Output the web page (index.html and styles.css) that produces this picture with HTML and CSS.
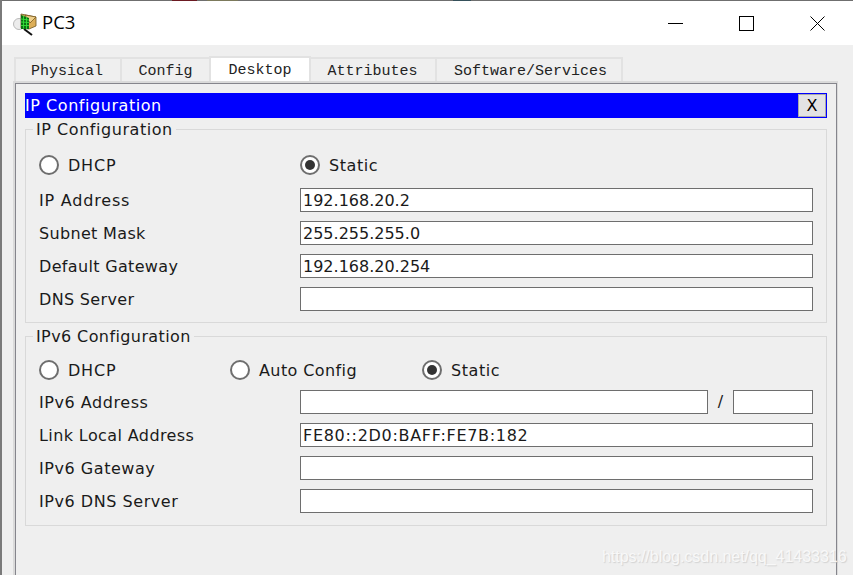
FILE: index.html
```html
<!DOCTYPE html>
<html lang="en">
<head>
<meta charset="utf-8">
<title>PC3</title>
<link rel="stylesheet" href="styles.css">
</head>
<body>
<div class="window">
  <div class="top-edge"></div>
  <header class="titlebar">
    <svg class="app-icon" width="24" height="24" viewBox="0 0 24 24" aria-hidden="true">
      <circle cx="6" cy="12" r="5.500" fill="#ececec" stroke="#b9b9b9"/>
      <path d="M11 17l8 6" stroke="#111" stroke-width="2" fill="none"/>
      <path d="M8 2l15 3v9l-7 3-8-1z" fill="#dcae58" stroke="#6f5522" stroke-width=".8"/>
      <path d="M12 3l11 2-6 6z" fill="#f0d08c" stroke="#7a5a20" stroke-width=".8"/>
      <path d="M8 3l8 3v11l-8 0z" fill="#0a6f12"/>
      <path d="M10.500 3.500v13M13.500 5v12M8 7l8 1M8 10l8 .5M8 13.500h8" stroke="#35e23a" stroke-width=".9" fill="none"/>
    </svg>
    <span class="title">PC3</span>
    <div class="controls">
      <svg class="ctl" width="15" height="15" viewBox="0 0 15 15" aria-hidden="true"><path d="M0 7.500h15" stroke="#000" fill="none"/></svg>
      <svg class="ctl" width="15" height="15" viewBox="0 0 15 15" aria-hidden="true"><rect x=".5" y=".5" width="14" height="14" stroke="#000" fill="none"/></svg>
      <svg class="ctl" width="15" height="15" viewBox="0 0 15 15" aria-hidden="true"><path d="M.5.500l14 14M14.500.500l-14 14" stroke="#000" fill="none"/></svg>
    </div>
  </header>
  <main class="content">
    <nav class="tabs">
      <span class="tab tab-physical">Physical</span>
      <span class="tab tab-config">Config</span>
      <span class="tab tab-active">Desktop</span>
      <span class="tab tab-attr">Attributes</span>
      <span class="tab tab-soft">Software/Services</span>
    </nav>
    <section class="panel">
      <div class="panel-inner">
        <div class="appbar">
          <span class="appbar-title sp-m">IP Configuration</span>
          <button class="appbar-close" type="button">X</button>
        </div>
        <fieldset class="group group-v4">
          <legend class="sp-m">IP Configuration</legend>
          <div class="radios radios-v4">
            <label class="radio"><span class="dot"></span><span class="sp-w">DHCP</span></label>
            <label class="radio"><span class="dot on"></span><span class="sp-m">Static</span></label>
          </div>
          <div class="row"><span class="sp-w">IP Address</span><span class="input">192.168.20.2</span></div>
          <div class="row"><span class="sp-n">Subnet Mask</span><span class="input">255.255.255.0</span></div>
          <div class="row"><span class="sp-n">Default Gateway</span><span class="input">192.168.20.254</span></div>
          <div class="row"><span class="sp-n">DNS Server</span><span class="input"></span></div>
        </fieldset>
        <fieldset class="group group-v6">
          <legend class="sp-l">IPv6 Configuration</legend>
          <div class="radios radios-v6">
            <label class="radio"><span class="dot"></span><span class="sp-w">DHCP</span></label>
            <label class="radio"><span class="dot"></span><span class="sp-l">Auto Config</span></label>
            <label class="radio"><span class="dot on"></span><span class="sp-m">Static</span></label>
          </div>
          <div class="row">
            <span class="sp-m">IPv6 Address</span>
            <div class="prefix"><span class="input"></span><span class="slash">/</span><span class="input"></span></div>
          </div>
          <div class="row"><span class="sp-l">Link Local Address</span><span class="input sp-h">FE80::2D0:BAFF:FE7B:182</span></div>
          <div class="row"><span class="sp-m">IPv6 Gateway</span><span class="input"></span></div>
          <div class="row"><span class="sp-m">IPv6 DNS Server</span><span class="input"></span></div>
        </fieldset>
      </div>
    </section>
  </main>
  <div class="watermark">https://blog.csdn.net/qq_41433316</div>
</div>
</body>
</html>
```

FILE: styles.css
```css
* { box-sizing: border-box; }
html, body { margin: 0; height: 100%; overflow: hidden; }
body {
  font-family: "DejaVu Sans", sans-serif;
  font-size: 16px;
  color: #1a1a1a;
  background: #efefef;
}
.sp-n { letter-spacing: .33px; }
.sp-l { letter-spacing: .4px; }
.sp-m { letter-spacing: .55px; }
.sp-w { letter-spacing: .8px; }
.sp-h { letter-spacing: .7px; }
.window {
  position: relative;
  height: 575px;
  border-left: 2px solid #7a7a7a;
  display: flex;
  flex-direction: column;
  overflow: hidden;
}
.top-edge {
  flex: none;
  height: 1px;
  background: linear-gradient(to right,
    #6f6f6f 170px, #6b1a22 170px, #6b1a22 195px, #6f6f6f 195px,
    #6f6f6f 205px, #7c7a5c 205px, #7c7a5c 236px, #6f6f6f 236px,
    #6f6f6f 451px, #35505a 451px, #35505a 469px, #6f6f6f 469px);
}
.titlebar {
  flex: none;
  height: 44px;
  background: #fff;
  display: flex;
  align-items: center;
  padding-left: 11px;
}
.app-icon { flex: none; margin-top: 1px; }
.title {
  font-family: "Open Sans", sans-serif;
  font-size: 18.500px;
  line-height: 24px;
  color: #000;
  margin-left: 5px;
  margin-top: -2px;
}
.controls {
  margin-left: auto;
  display: flex;
  gap: 56px;
  padding-right: 28px;
}
.ctl { display: block; }
.content {
  flex: 1;
  min-height: 0;
  padding-top: 11px;
  padding-left: 11px;
  padding-right: 14px;
}
.tabs {
  height: 26px;
  display: flex;
  padding-left: 1px;
  font-family: "Liberation Mono", monospace;
  font-size: 15px;
  line-height: 1;
  color: #222;
}
.tab {
  border: 2px solid #e2e2e2;
  border-bottom: 0;
  border-right-width: 0;
  display: flex;
  align-items: center;
  justify-content: center;
  padding-top: 1px;
  margin-top: 1px;
}
.tab-physical { width: 106px; padding-right: 2px; }
.tab-config { width: 89px; }
.tab-active {
  width: 102px;
  margin-top: 0;
  background: #fff;
  border-right-width: 2px;
  padding-bottom: 1px;
}
.tab-attr { width: 124px; border-left: 0; padding-right: 1px; }
.tab-soft { width: 188px; border-right-width: 2px; padding-left: 3px; }
.panel {
  height: 520px;
  margin-top: -1px;
  border: 2px solid #dadada;
  border-bottom: 0;
  position: relative;
  width: 825px;
}
.panel-inner {
  height: 100%;
  border-left: 1px solid #85858c;
  border-top: 1px solid #85858c;
  border-right: 1px solid #85858c;
  padding: 9px 9px 0 9px;
  margin-right: -1px;
}
.appbar {
  height: 25px;
  width: 802px;
  background: #0000ff;
  display: flex;
  align-items: center;
  justify-content: space-between;
  padding: 1px;
}
.appbar-title { color: #fff; margin-left: -1px; }
.appbar-close {
  width: 28px;
  height: 23px;
  padding: 0;
  background: #e3e3e3;
  border: 1px solid #a9a9a9;
  font: inherit;
  color: #000;
}
.group {
  margin: 0;
  width: 802px;
  border: 1px solid #d9d9d9;
  padding: 0 13px;
  min-width: 0;
}
.group legend {
  margin-left: -6px;
  padding: 0 3px;
  line-height: 21px;
}
.group-v4 { height: 204px; margin-top: 1px; }
.group-v6 { height: 200px; margin-top: 3px; }
.radios { display: flex; height: 24px; align-items: center; }
.radios-v4 { margin-top: 13px; margin-bottom: 11px; }
.radios-v6 { margin-top: 11px; margin-bottom: 8px; }
.radio { display: flex; align-items: center; gap: 9px; }
.radios-v4 .radio:first-child { width: 261px; }
.radios-v6 .radio:nth-child(1) { width: 191px; }
.radios-v6 .radio:nth-child(2) { width: 192px; }
.dot {
  width: 20px;
  height: 20px;
  border: 2px solid #6e6e6e;
  border-radius: 50%;
  background: #fff;
  display: flex;
  align-items: center;
  justify-content: center;
}
.dot.on::after {
  content: "";
  width: 10px;
  height: 10px;
  border-radius: 50%;
  background: #333;
}
.row {
  display: grid;
  grid-template-columns: 261px 513px;
  height: 24px;
  align-items: center;
  margin-bottom: 9px;
}
.input {
  display: block;
  height: 24px;
  background: #fff;
  border: 1px solid #6e6e6e;
  padding: 1px 2px 0;
  line-height: 22px;
  min-width: 0;
}
.prefix {
  display: grid;
  grid-template-columns: 408px 25px 80px;
}
.slash { text-align: center; line-height: 24px; }
.watermark {
  position: absolute;
  left: 600px;
  top: 548px;
  font-family: "Liberation Sans", sans-serif;
  font-size: 16px;
  letter-spacing: -.03px;
  color: #f8f8f8;
  text-shadow: 1px 1px 1px rgba(190,190,190,.6);
  white-space: nowrap;
}
```
